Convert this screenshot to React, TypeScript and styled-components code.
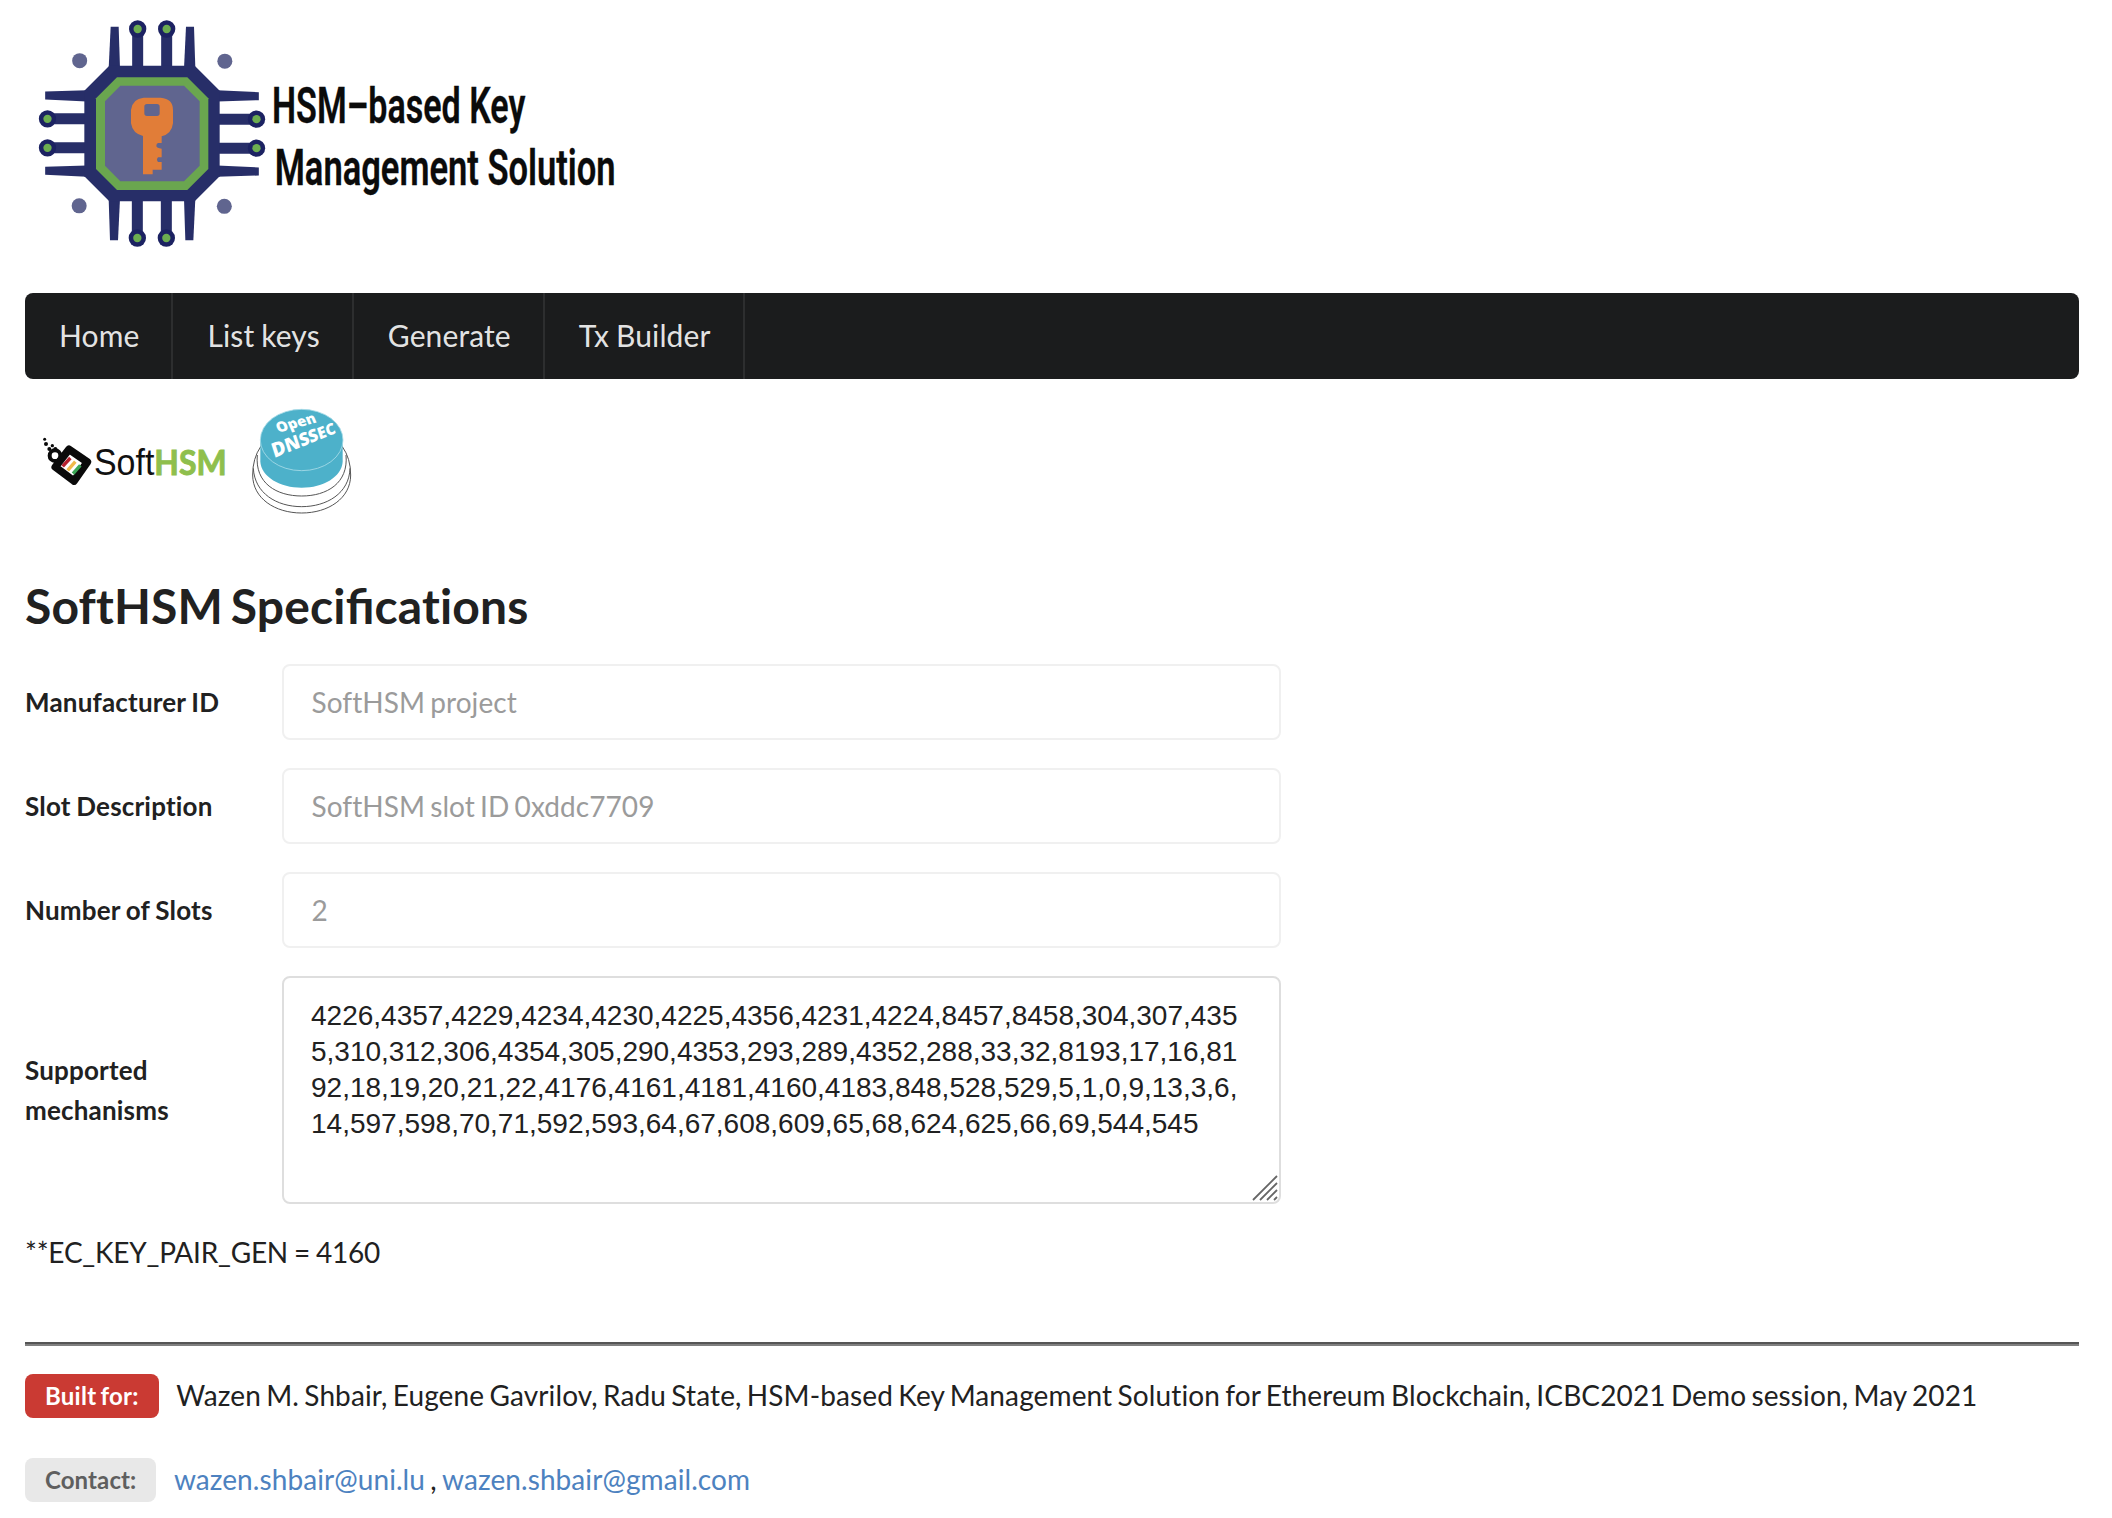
import React from 'react';
import styled, { createGlobalStyle, css } from 'styled-components';

const GlobalStyle = createGlobalStyle`
  *, *::before, *::after { box-sizing: border-box; }
  html, body { margin: 0; padding: 0; background: #fff; }
  body {
    font-family: Lato, 'Helvetica Neue', Arial, 'Liberation Sans', sans-serif;
    font-size: 28px;
    line-height: 40px;
    color: #212121;
    font-variant-ligatures: none;
    letter-spacing: 0.12px;
    word-spacing: -2px;
  }
`;

const Page = styled.div`
  display: flex;
  flex-direction: column;
  width: 2112px;
  height: 1518px;
  padding: 0 33px 0 25px;
`;

const Drawing = styled.svg`
  display: block;
  overflow: visible;
  letter-spacing: 0;
  word-spacing: 0;
`;

const Banner = styled.header`
  height: 293px;
  margin-left: -5px;
`;

const Menu = styled.nav`
  display: flex;
  height: 86px;
  flex: none;
  border-radius: 8px;
  background: #1b1c1d;
  font-size: 30px;
  word-spacing: -0.8px;
`;

const MenuItem = styled.a`
  display: flex;
  align-items: center;
  padding: 0 32px 2px 34px;
  color: rgba(255, 255, 255, 0.9);
  border-right: 2px solid #2d2e2f;
  cursor: pointer;
`;

const Logos = styled.div`
  height: 140px;
  margin: 11px 0 0 -5px;
  flex: none;
`;

const Title = styled.h2`
  margin: 45px 0 0;
  height: 62px;
  font-size: 48px;
  line-height: 62px;
  font-weight: 700;
  letter-spacing: 0.15px;
  word-spacing: -4px;
`;

const Ligature = styled.span`
  font-variant-ligatures: common-ligatures;
  letter-spacing: 0;
`;

const Form = styled.form`
  display: flex;
  flex-direction: column;
  gap: 28px;
  margin-top: 27px;
`;

const Field = styled.div`
  display: grid;
  grid-template-columns: 257px 999px;
  align-items: center;
`;

const Label = styled.label`
  width: 210px;
  font-size: 26px;
  font-weight: 700;
  letter-spacing: 0.18px;
  word-spacing: -0.8px;
`;

const control = css`
  display: block;
  width: 100%;
  margin: 0;
  border-radius: 8px;
  background: #fff;
  font-size: 28px;
  outline: none;
`;

const TextInput = styled.input`
  ${control}
  height: 76px;
  padding: 0 27.5px;
  border: 2px solid #f0f0f0;
  color: #9b9b9b;
  font-family: inherit;
  font-variant-ligatures: none;
  letter-spacing: 0.06px;
  word-spacing: -2px;
`;

const AreaWrap = styled.div`
  position: relative;
`;

const TextArea = styled.textarea`
  ${control}
  height: 228px;
  padding: 20px 27px;
  border: 2px solid #dedede;
  color: #212121;
  font-family: 'Liberation Sans', Arial, sans-serif;
  line-height: 36px;
  word-break: break-all;
  resize: none;
  overflow: hidden;
`;

const Grip = styled.svg`
  position: absolute;
  right: 3px;
  bottom: 3px;
`;

const Note = styled.p`
  margin: 28px 0 0;
  letter-spacing: -0.22px;
  word-spacing: -1px;
`;

const Rule = styled.hr`
  width: 100%;
  height: 4px;
  flex: none;
  margin: 70px 0 0;
  border: 0;
  border-top: 2px solid #555;
  background: #808080;
`;

const FooterRow = styled.div<{ $top: number }>`
  display: flex;
  align-items: center;
  gap: 17.5px;
  height: 44px;
  margin-top: ${(p) => p.$top}px;
  white-space: pre;
`;

const FooterText = styled.span`
  padding-bottom: 3px;
`;

const Tag = styled.span<{ $red?: boolean }>`
  display: flex;
  align-items: center;
  height: 44px;
  padding: 0 20px;
  border-radius: 8px;
  font-size: 24px;
  font-weight: 700;
  letter-spacing: ${(p) => (p.$red ? 0.25 : 0.1)}px;
  color: ${(p) => (p.$red ? '#fff' : '#5f5f5f')};
  background: ${(p) => (p.$red ? '#ca3a33' : '#e8e8e8')};
`;

const Link = styled.a`
  color: #4d82c0;
  letter-spacing: 0.08px;
  cursor: pointer;
`;

const Pin = () => (
  <g>
    <path d="M272 80H296L300 205H266Z" fill="#272e68" />
    <path d="M498 80H522L526 205H492Z" fill="#272e68" />
    <path d="M353 90V215M440 90V215" stroke="#272e68" strokeWidth="33" />
    <circle cx="353" cy="87" r="26" fill="#1c2262" />
    <circle cx="440" cy="87" r="26" fill="#1c2262" />
    <circle cx="353" cy="87" r="12.5" fill="#6cad50" />
    <circle cx="440" cy="87" r="12.5" fill="#6cad50" />
    <circle cx="179" cy="182" r="22.5" fill="#60658f" />
  </g>
);

const BrandLogo = () => (
  <Drawing width="620" height="260" viewBox="0 0 1860 780">
    {[0, 90, 180, 270].map((a) => (
      <g key={a} transform={`rotate(${a} 396 400.5)`}>
        <Pin />
      </g>
    ))}
    <path d="M268 197H524L599 272V529L524 604H268L193 529V272Z" fill="#272e68" />
    <path d="M291 232H502L565 295V507L502 570H291L228 507V295Z" fill="#6aa64f" />
    <path d="M301 257H492L539 304V497L492 544H301L255 497V304Z" fill="#60658f" />
    <path
      fillRule="evenodd"
      fill="#e17d38"
      d="M371 293H422Q459 296 459 330V370Q455 402 425 409V429H414Q409 431 409 438Q410 445 425 446V472H414Q408 479 414 486H425V509H398V523H369V408Q338 401 333 370V330Q337 296 371 293ZM381 312Q373 312 373 320V340Q373 348 381 348H411Q419 348 419 340V320Q419 312 411 312Z"
    />
    <g fontFamily="Roboto, sans-serif" fontWeight="600" fontSize="150" fill="#0b0b0b" stroke="#0b0b0b" strokeWidth="1">
      <text x="756" y="370" textLength="760" lengthAdjust="spacingAndGlyphs">HSM–based Key</text>
      <text x="764" y="555" textLength="1023" lengthAdjust="spacingAndGlyphs">Management Solution</text>
    </g>
  </Drawing>
);

const PartnerLogos = () => (
  <Drawing width="350" height="140" viewBox="0 0 1050 420">
    <circle cx="105" cy="197" r="16" fill="#fff" stroke="#0a0a0a" strokeWidth="12" />
    <g fill="#0a0a0a">
      <circle cx="74" cy="148" r="4.5" />
      <circle cx="78" cy="162" r="6" />
      <circle cx="97" cy="167" r="5" />
      <circle cx="88" cy="177" r="6" />
      <circle cx="106" cy="177" r="6" />
    </g>
    <path d="M147 178L202 216L162 273L106 231Z" fill="#fff" stroke="#0a0a0a" strokeWidth="23" strokeLinejoin="round" />
    <g strokeWidth="10">
      <path d="M128 229L151 204" stroke="#b5202c" />
      <path d="M143 241L166 215" stroke="#efb94a" />
      <path d="M159 251L181 226" stroke="#3aa655" />
    </g>
    <text x="222" y="254" textLength="181" lengthAdjust="spacingAndGlyphs" fontFamily="'Liberation Sans', Arial, sans-serif" fontSize="108" fill="#111">Soft</text>
    <text x="403" y="254" textLength="217" lengthAdjust="spacingAndGlyphs" fontFamily="Lato, sans-serif" fontWeight="700" fontSize="104" fill="#8fbf4d" stroke="#8fbf4d" strokeWidth="3">HSM</text>
    <g fill="#fff" stroke="#555" strokeWidth="3">
      <path d="M722 170Q698 205 698 255C698 325 765 369 845 369S992 325 992 255Q992 205 967 170Z" />
      <path d="M700 235C704 310 770 350 845 350S988 310 990 235" fill="none" />
      <path d="M712 195C704 280 770 318 845 318S986 280 978 195" fill="none" />
    </g>
    <path d="M721 152V215C724 260 780 293 845 293S965 260 968 215V152Z" fill="#4db1ca" />
    <ellipse cx="845" cy="150" rx="124" ry="92" fill="#4db1ca" stroke="#a9dce8" strokeWidth="2.5" />
    <g fill="#fff" fontFamily="'Open Sans', sans-serif" fontWeight="800">
      <text transform="translate(775 128) rotate(-15) skewX(8)" fontSize="43" textLength="121" lengthAdjust="spacingAndGlyphs">Open</text>
      <text transform="translate(763 204) rotate(-22) skewX(-4)" fontSize="60" textLength="201" lengthAdjust="spacingAndGlyphs">
        D<tspan fontSize="57">N</tspan><tspan fontSize="54">S</tspan><tspan fontSize="52">S</tspan><tspan fontSize="49">E</tspan><tspan fontSize="47">C</tspan>
      </text>
    </g>
  </Drawing>
);

const MECHANISMS =
  '4226,4357,4229,4234,4230,4225,4356,4231,4224,8457,8458,304,307,4355,310,312,306,4354,305,290,4353,293,289,4352,288,33,32,8193,17,16,8192,18,19,20,21,22,4176,4161,4181,4160,4183,848,528,529,5,1,0,9,13,3,6,14,597,598,70,71,592,593,64,67,608,609,65,68,624,625,66,69,544,545';

const SPECS = [
  ['Manufacturer ID', 'SoftHSM project'],
  ['Slot Description', 'SoftHSM slot ID 0xddc7709'],
  ['Number of Slots', '2'],
];

export default function App() {
  return (
    <>
      <GlobalStyle />
      <Page>
        <Banner>
          <BrandLogo />
        </Banner>
        <Menu>
          {['Home', 'List keys', 'Generate', 'Tx Builder'].map((item) => (
            <MenuItem key={item}>{item}</MenuItem>
          ))}
        </Menu>
        <Logos>
          <PartnerLogos />
        </Logos>
        <Title>
          SoftHSM Speci<Ligature>fi</Ligature>cations
        </Title>
        <Form>
          {SPECS.map(([label, value]) => (
            <Field key={label}>
              <Label>{label}</Label>
              <TextInput readOnly value={value} />
            </Field>
          ))}
          <Field>
            <Label>
              Supported
              <br />
              mechanisms
            </Label>
            <AreaWrap>
              <TextArea readOnly spellCheck={false} value={MECHANISMS} />
              <Grip width="26" height="26" viewBox="0 0 26 26" stroke="#666" strokeWidth="1.8">
                <path d="M1 25L25 1M8 25L25 8M15 25L25 15M22 25L25 22" />
              </Grip>
            </AreaWrap>
          </Field>
        </Form>
        <Note>**EC_KEY_PAIR_GEN = 4160</Note>
        <Rule />
        <FooterRow $top={28}>
          <Tag $red>Built for:</Tag>
          <FooterText>
            Wazen M. Shbair, Eugene Gavrilov, Radu State, HSM-based Key Management Solution for Ethereum Blockchain, ICBC2021 Demo session, May 2021
          </FooterText>
        </FooterRow>
        <FooterRow $top={40}>
          <Tag>Contact:</Tag>
          <FooterText>
            <Link>wazen.shbair@uni.lu</Link> , <Link>wazen.shbair@gmail.com</Link>
          </FooterText>
        </FooterRow>
      </Page>
    </>
  );
}
